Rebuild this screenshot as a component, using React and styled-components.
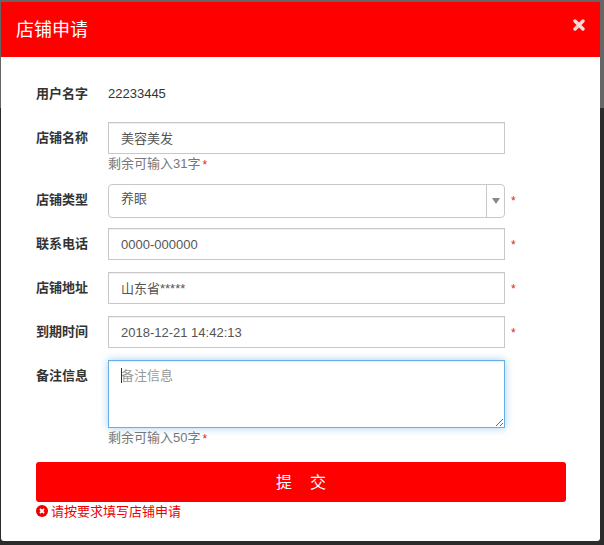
import React from 'react';
import styled, { createGlobalStyle } from 'styled-components';

const GlobalStyle = createGlobalStyle`
    html, body {
        margin: 0;
        height: 100%;
    }

    body {
        background: #2b2b2b;
        font-family: "Liberation Sans", "Noto Sans CJK SC", sans-serif;
        overflow: hidden;
    }
`

const Backdrop = styled.div`
    width: 604px;
    height: 545px;
    padding: 2px 0 0 1px;
    box-sizing: border-box;
    background: linear-gradient(180deg, #666 0, #666 108px, #2b2b2b 108px);
`

const Modal = styled.div`
    width: 599px;
    height: 539px;
    background: #fff;
    border-radius: 0 0 3px 3px;
    display: flex;
    flex-direction: column;
`

const Header = styled.div`
    height: 55px;
    flex: none;
    background: #f00;
    color: #fff;
    display: flex;
    align-items: center;
    justify-content: space-between;
    padding: 0 15px;
    font-size: 18px;
`

const Title = styled.h4`
    margin: 0;
    font-size: 18px;
    font-weight: 400;
    line-height: 1;
`

const Close = styled.svg`
    width: 12px;
    height: 12px;
    margin: 0 0 9px;
    color: #fbd8d8;
`

const Body = styled.form`
    padding: 28px 35px 0;
    display: flex;
    flex-direction: column;
    color: #333;
    font-size: 13px;
`

const Row = styled.div`
    display: grid;
    grid-template-columns: 72px 397px auto;
    margin-bottom: ${(p) => p.$gap ?? 12}px;
`

const Label = styled.label`
    font-weight: 700;
    font-size: 13px;
    line-height: 18px;
    padding-top: ${(p) => p.$top ?? 7}px;
    color: #333;
`

const Static = styled.div`
    font-size: 13px;
    line-height: 18px;
    height: 37px;
`

const Input = styled.input`
    width: 397px;
    height: 32px;
    box-sizing: border-box;
    border: 1px solid #c8c8c8;
    box-shadow: inset 0 1px 1px rgba(0, 0, 0, 0.075);
    padding: 0 12px ${(p) => (p.$raised ? 2 : 0)}px;
    font: 13px "Liberation Sans", "Noto Sans CJK SC", sans-serif;
    color: #555;
    outline: none;
`

const SelectBox = styled.div`
    width: 397px;
    height: 34px;
    box-sizing: border-box;
    border: 1px solid #c8c8c8;
    border-radius: 4px;
    display: flex;
    justify-content: space-between;
    padding-left: 12px;
    font-size: 13px;
    line-height: 28px;
    color: #555;
`

const Arrow = styled.span`
    width: 18px;
    box-sizing: border-box;
    border-left: 1px solid #c8c8c8;
    display: flex;
    align-items: center;
    justify-content: center;

    &::after {
        content: "";
        border-style: solid;
        border-width: 6px 4px 0;
        border-color: #888 transparent transparent;
    }
`

const TextareaWrap = styled.div`
    position: relative;

    &::after {
        content: "";
        position: absolute;
        left: 13px;
        top: 8px;
        width: 1px;
        height: 15px;
        background: #333;
    }
`

const Textarea = styled.textarea`
    display: block;
    width: 397px;
    height: 68px;
    box-sizing: border-box;
    margin: 0;
    border: 1px solid #66afe9;
    box-shadow: inset 0 1px 1px rgba(0, 0, 0, 0.075), 0 0 8px rgba(102, 175, 233, 0.6);
    padding: 6px 12px;
    font: 13px/18px "Liberation Sans", "Noto Sans CJK SC", sans-serif;
    color: #555;
    outline: none;

    &::placeholder {
        color: #999;
    }
`

const Hint = styled.div`
    font-size: 13px;
    line-height: 18px;
    padding-top: 1px;
    margin-bottom: -1px;
    color: #777;
    display: flex;
    gap: 2px;
`

const Star = styled.span`
    color: #d9233c;
    font-size: 12px;
    height: ${(p) => (p.$line || 34) - 2}px;
    line-height: ${(p) => p.$line || 34}px;
    padding-left: ${(p) => p.$left ?? 6}px;
`

const Submit = styled.button`
    width: 530px;
    height: 40px;
    flex: none;
    border: 0;
    border-radius: 3px;
    padding: 0 0 2px;
    background: #f00;
    color: #fff;
    font: 16px "Liberation Sans", "Noto Sans CJK SC", sans-serif;
    white-space: pre;
`

const ErrorLine = styled.div`
    display: flex;
    align-items: center;
    gap: 3px;
    height: 17px;
    color: #e00;
    font-size: 13px;
`

const ErrorIcon = styled.svg`
    width: 12px;
    height: 12px;
    flex: none;
`

function Field({ label, value, raised }) {
    return (
        <Row>
            <Label>{label}</Label>
            <Input defaultValue={value} $raised={raised} />
            <Star>*</Star>
        </Row>
    )
}

function App() {
    return (
        <Backdrop>
            <GlobalStyle />
            <Modal>
                <Header>
                    <Title>店铺申请</Title>
                    <Close viewBox="0 0 12 12">
                        <path d="M2 2l8 8M10 2l-8 8" stroke="currentColor" strokeWidth="3.4" strokeLinecap="round" />
                    </Close>
                </Header>
                <Body onSubmit={(e) => e.preventDefault()}>
                    <Row $gap={0}>
                        <Label $top={0}>用户名字</Label>
                        <Static>22233445</Static>
                    </Row>
                    <Row>
                        <Label>店铺名称</Label>
                        <div>
                            <Input defaultValue="美容美发" $raised />
                            <Hint>剩余可输入31字<Star $line={20} $left={0}>*</Star></Hint>
                        </div>
                    </Row>
                    <Row $gap={10}>
                        <Label>店铺类型</Label>
                        <SelectBox>养眼<Arrow /></SelectBox>
                        <Star>*</Star>
                    </Row>
                    <Field label="联系电话" value="0000-000000" />
                    <Field label="店铺地址" value="山东省*****" raised />
                    <Field label="到期时间" value="2018-12-21 14:42:13" />
                    <Row $gap={16}>
                        <Label>备注信息</Label>
                        <div>
                            <TextareaWrap>
                                <Textarea placeholder="备注信息" />
                            </TextareaWrap>
                            <Hint>剩余可输入50字<Star $line={20} $left={0}>*</Star></Hint>
                        </div>
                    </Row>
                    <Submit type="submit">提    交</Submit>
                    <ErrorLine>
                        <ErrorIcon viewBox="0 0 12 12">
                            <circle cx="6" cy="6" r="6" fill="#e00" />
                            <path d="M4 4l4 4M8 4l-4 4" stroke="#fff" strokeWidth="1.8" />
                        </ErrorIcon>
                        请按要求填写店铺申请
                    </ErrorLine>
                </Body>
            </Modal>
        </Backdrop>
    )
}

export default App;
